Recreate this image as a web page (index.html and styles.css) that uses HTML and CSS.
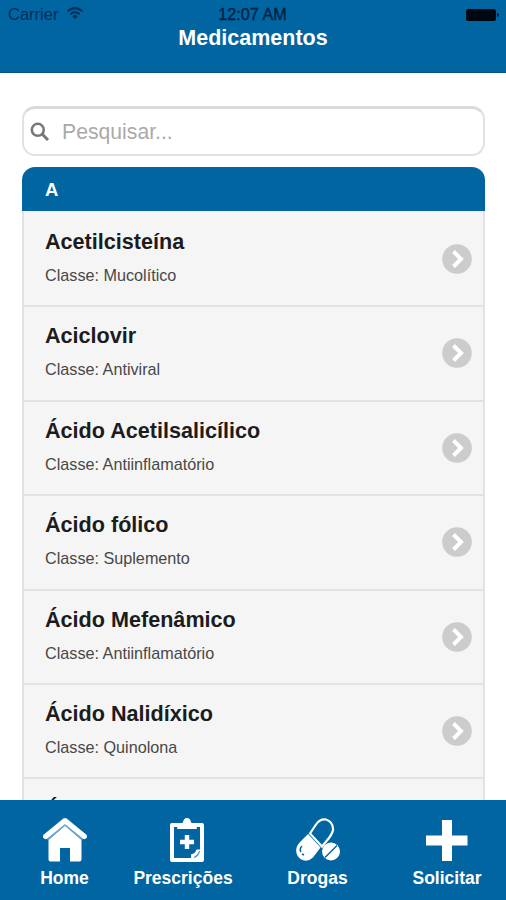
FILE: index.html
```html
<!DOCTYPE html>
<html lang="pt-BR">
<head>
<meta charset="utf-8">
<title>Medicamentos</title>
<link rel="stylesheet" href="styles.css">
</head>
<body>
<svg class="defs" width="0" height="0" aria-hidden="true">
  <symbol id="go" viewBox="0 0 30 30">
    <circle cx="15" cy="15" r="14.8" fill="#ccc"/>
    <path d="M11.500 7.500l7.500 7.500-7.500 7.500" fill="none" stroke="#fff" stroke-width="4"/>
  </symbol>
</svg>
<header class="header">
  <div class="status">
    <div class="carrier"><span>Carrier</span>
      <svg width="18" height="13" viewBox="0 0 18 13" fill="none" stroke="currentColor" stroke-width="2"><path d="M1.500 4.300Q9-2 16.500 4.300M4.300 7.200Q9 3.200 13.700 7.200"/><path d="M6.300 9.200Q9 7 11.700 9.200L9 12z" fill="currentColor" stroke="none"/></svg>
    </div>
    <span class="time">12:07 AM</span>
    <svg class="battery" width="33" height="12" viewBox="0 0 33 12"><rect width="30" height="12" rx="2.500"/><path d="M31 4q2 .5 2 2t-2 2z"/></svg>
  </div>
  <h1>Medicamentos</h1>
</header>
<main class="content">
  <label class="search">
    <svg width="20" height="20" viewBox="0 0 20 20" fill="none" stroke="#777"><circle cx="7.800" cy="7.800" r="6" stroke-width="2.500"/><path d="M12.300 12.300l5.700 5.700" stroke-width="3"/></svg>
    <span>Pesquisar...</span>
  </label>
  <section class="list">
    <div class="divider">A</div>
    <article class="item"><div><h2>Acetilcisteína</h2><p>Classe: Mucolítico</p></div><svg class="go"><use href="#go"/></svg></article>
    <article class="item"><div><h2>Aciclovir</h2><p>Classe: Antiviral</p></div><svg class="go"><use href="#go"/></svg></article>
    <article class="item"><div><h2>Ácido Acetilsalicílico</h2><p>Classe: Antiinflamatório</p></div><svg class="go"><use href="#go"/></svg></article>
    <article class="item"><div><h2>Ácido fólico</h2><p>Classe: Suplemento</p></div><svg class="go"><use href="#go"/></svg></article>
    <article class="item"><div><h2>Ácido Mefenâmico</h2><p>Classe: Antiinflamatório</p></div><svg class="go"><use href="#go"/></svg></article>
    <article class="item"><div><h2>Ácido Nalidíxico</h2><p>Classe: Quinolona</p></div><svg class="go"><use href="#go"/></svg></article>
    <article class="item"><div><h2>Ácido Valpróico</h2></div></article>
  </section>
</main>
<nav class="tabs">
  <a class="tab">
    <svg width="44" height="44" viewBox="0 0 44 44" fill="#fff"><path d="M5.500 22L22 7.500 38.500 22v19.500q0 2-2 2H27V30H17v13.500H7.500q-2 0-2-2z"/><path d="M2.800 19.500L22 3.300 41.200 19.500" fill="none" stroke="#6ba6cb" stroke-width="7"/><path d="M2.500 18.500L22 2.800 41.500 18.500" fill="none" stroke="#fff" stroke-width="5" stroke-linejoin="round" stroke-linecap="round"/></svg>
    <span>Home</span>
  </a>
  <a class="tab clip">
    <svg width="34" height="44" viewBox="0 0 34 44"><path d="M2 5h30q2 0 2 2v35q0 2-2 2H2q-2 0-2-2V7q0-2 2-2z" fill="#fff"/><path d="M4 9h26v22.500h-3.500q-1 4-5.500 5V40H4z" fill="#0065a0"/><path d="M7 11q.5-5 6-6.500Q13.500 0 17 0t4 4.500q5.500 1.500 6 6.500z" fill="#fff"/><path d="M14.800 17h4.400v4.800H24v4.400h-4.800V31h-4.400v-4.800H10v-4.400h4.800z" fill="#fff"/><path d="M24 39.500q4.500-2 5.500-6.500" fill="none" stroke="#4c93c0" stroke-width="1.200"/></svg>
    <span>Prescrições</span>
  </a>
  <a class="tab">
    <svg width="44" height="44" viewBox="0 0 44 44"><path d="M14 15.500L20 6.500Q24 .5 30 1.500 37.500 4 37 12 36.500 15 33 20L26 28.500z" fill="none" stroke="#fff" stroke-width="2.200"/><path d="M12 16L24.500 29.500 17 39.500Q11 45 4.500 41-1 37 .5 30 1 27 5 23z" fill="#fff"/><path d="M6 28q-3 3-1 6M6 36l2 1" fill="none" stroke="#0065a0" stroke-width="1.500"/><circle cx="35" cy="33.500" r="9" fill="#fff"/><path d="M29 39.500l12-12" stroke="#0065a0" stroke-width="1.400"/></svg>
    <span>Drogas</span>
  </a>
  <a class="tab">
    <svg width="42" height="44" viewBox="0 0 42 44"><path d="M16 2h10v15.500h15.500v10H26V43H16V27.500H0v-10h16z" fill="#fff"/></svg>
    <span>Solicitar</span>
  </a>
</nav>
</body>
</html>
```
FILE: styles.css
```css
* { box-sizing: border-box; }
body {
  margin: 0;
  height: 900px;
  overflow: hidden;
  display: flex;
  flex-direction: column;
  background: #fff;
  font-family: "Liberation Sans", Arial, sans-serif;
}
h1, h2, p { margin: 0; }
.defs { position: absolute; }
.header {
  flex: none;
  height: 73px;
  background: #0065a0;
  border-bottom: 1px solid #00558b;
  color: #fff;
}
.status {
  display: grid;
  grid-template-columns: 1fr auto 1fr;
  align-items: center;
  height: 26px;
  padding: 3px 7px 0 6px;
  font-size: 16.2px;
  line-height: 23px;
  color: #002e59;
}
.carrier { display: flex; align-items: center; gap: 8px; padding-left: 2px; font-size: 16.5px; }
.carrier svg { margin-top: -2px; }
.time { color: #001f42; -webkit-text-stroke: .3px; }
.battery { justify-self: end; fill: #000811; }
h1 {
  font-size: 21.5px;
  line-height: 24px;
  text-align: center;
}
.content {
  flex: 1;
  min-height: 0;
  overflow: hidden;
  padding: 33px 21px 0 22px;
}
.search {
  display: flex;
  align-items: center;
  gap: 12px;
  height: 50px;
  margin-bottom: 11px;
  padding-left: 6px;
  border: 2px solid #e2e2e2;
  border-top: 3px solid #dadada;
  border-radius: 13px;
  background: #fff;
  color: #aaa;
  font-size: 21.2px;
}
.list {
  border-radius: 13px 13px 0 0;
  overflow: hidden;
}
.divider {
  height: 44px;
  padding-left: 23px;
  background: #0065a0;
  color: #fff;
  font-size: 18.5px;
  font-weight: bold;
  line-height: 46px;
}
.item {
  display: flex;
  justify-content: space-between;
  height: 94.4px;
  padding: 16px 11px 0 21px;
  border: solid #e2e2e2;
  border-width: 0 2px 2px;
  background: #f5f5f5;
}
.divider + .item { height: 96.400px; padding-top: 18px; }
.item:last-child { padding-top: 18px; }
h2 {
  font-size: 21.6px;
  line-height: 25px;
  color: #1c1c1c;
}
.item p {
  margin-top: 11px;
  font-size: 16.2px;
  line-height: 20px;
  color: #484848;
}
.go { width: 30px; height: 30px; margin-top: 15px; }
.tabs {
  flex: none;
  display: grid;
  grid-template-columns: 129px 108px 161px 98px;
  height: 100px;
  padding-top: 18px;
  background: #0065a0;
  color: #fff;
  font-size: 17.5px;
  font-weight: bold;
  line-height: 22px;
}
.tab {
  display: flex;
  flex-direction: column;
  align-items: center;
  gap: 5px;
  white-space: nowrap;
}
.clip svg { margin-left: 7px; }
```
